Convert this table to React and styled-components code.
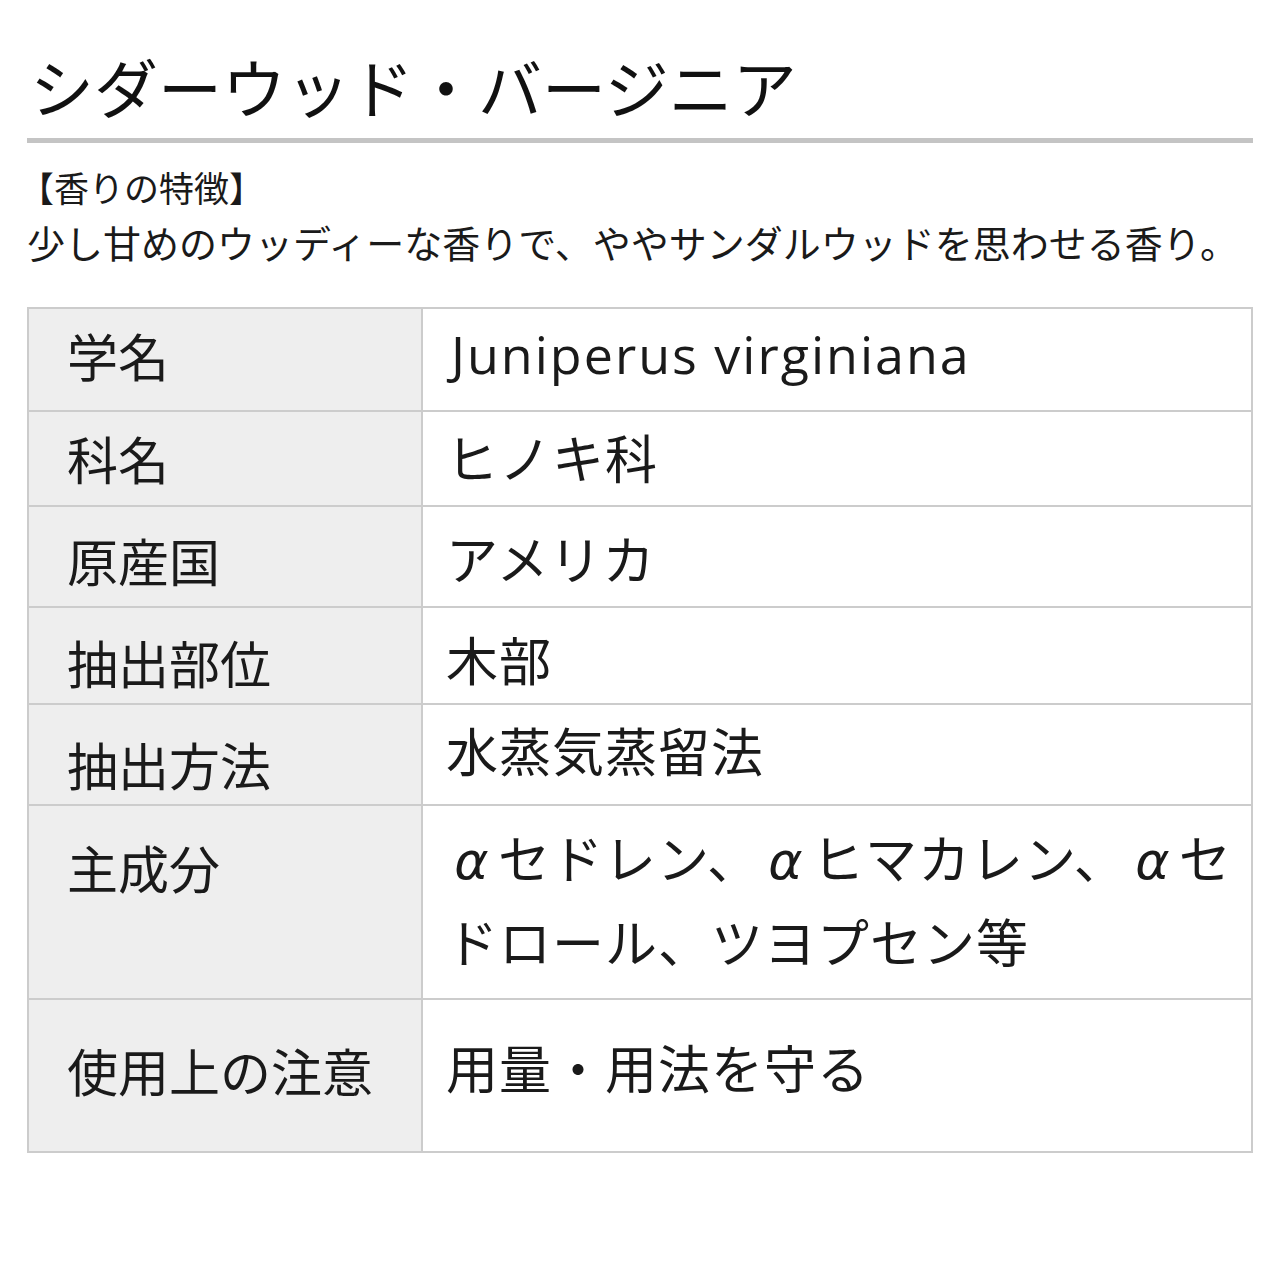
import React from 'react';
import styled, { createGlobalStyle } from 'styled-components';

const GlobalStyle = createGlobalStyle`
  html, body {
    margin: 0;
    padding: 0;
    background: #fff;
  }
  body {
    font-family: "Noto Sans CJK JP", "Noto Sans", sans-serif;
    color: #1a1a1a;
  }
`;

const Page = styled.div`
  width: 1226px;
  padding: 0 27px 120px;
`;

const Title = styled.h1`
  margin: 53px 0 0;
  padding: 0 0 21px 3px;
  font-size: 64px;
  line-height: 1;
  font-weight: 400;
  color: #111;
  border-bottom: 5px solid #c4c4c4;
`;

const Feature = styled.div`
  margin-top: 16px;
  line-height: 55px;
`;

const FeatureHead = styled.div`
  font-size: 35px;
  margin-left: -8px;
`;

const FeatureText = styled.div`
  font-size: 38px;
  white-space: nowrap;
`;

const Table = styled.div`
  margin-top: 38px;
  border: 2px solid #cccccc;
`;

const Row = styled.div`
  display: grid;
  grid-template-columns: 394px 1fr;
  height: ${(p) => p.$h}px;
  & + & {
    border-top: 2px solid #cccccc;
  }
`;

const Label = styled.div`
  background: #eeeeee;
  border-right: 2px solid #cccccc;
  padding: ${(p) => p.$top}px 0 0 38px;
  font-size: 51px;
  line-height: 1;
`;

const Value = styled.div`
  padding: ${(p) => p.$top}px 2px 0 ${(p) => (p.$latin ? 28 : 23)}px;
  font-size: 52px;
  line-height: 80px;
  word-break: break-all;
  font-family: ${(p) =>
    p.$latin ? '"Open Sans", "Noto Sans CJK JP", sans-serif' : 'inherit'};
  letter-spacing: ${(p) => (p.$latin ? '2px' : '1px')};
  font-weight: 400;
`;

const Alpha = styled.span`
  display: inline-block;
  width: 1em;
  text-align: center;
  font-family: "DejaVu Sans", sans-serif;
  font-style: italic;
`;

const withAlpha = (text) =>
  text.split('α').map((part, i) => (
    <React.Fragment key={i}>
      {i > 0 && <Alpha>α</Alpha>}
      {part}
    </React.Fragment>
  ));

const rows = [
  { label: '学名', value: 'Juniperus virginiana', h: 101, lt: 21, vt: 5, latin: true },
  { label: '科名', value: 'ヒノキ科', h: 93, lt: 21, vt: 5 },
  { label: '原産国', value: 'アメリカ', h: 99, lt: 28, vt: 11 },
  { label: '抽出部位', value: '木部', h: 95, lt: 29, vt: 11 },
  { label: '抽出方法', value: '水蒸気蒸留法', h: 99, lt: 34, vt: 5 },
  {
    label: '主成分',
    value: 'αセドレン、αヒマカレン、αセドロール、ツヨプセン等',
    h: 192,
    lt: 36,
    vt: 11,
  },
  { label: '使用上の注意', value: '用量・用法を守る', h: 151, lt: 45, vt: 27 },
];

export default function App() {
  return (
    <Page>
      <GlobalStyle />
      <Title>シダーウッド・バージニア</Title>
      <Feature>
        <FeatureHead>【香りの特徴】</FeatureHead>
        <FeatureText>
          少し甘めのウッディーな香りで、ややサンダルウッドを思わせる香り。
        </FeatureText>
      </Feature>
      <Table>
        {rows.map((r) => (
          <Row key={r.label} $h={r.h}>
            <Label $top={r.lt}>{r.label}</Label>
            <Value $top={r.vt} $latin={r.latin}>
              {withAlpha(r.value)}
            </Value>
          </Row>
        ))}
      </Table>
    </Page>
  );
}
